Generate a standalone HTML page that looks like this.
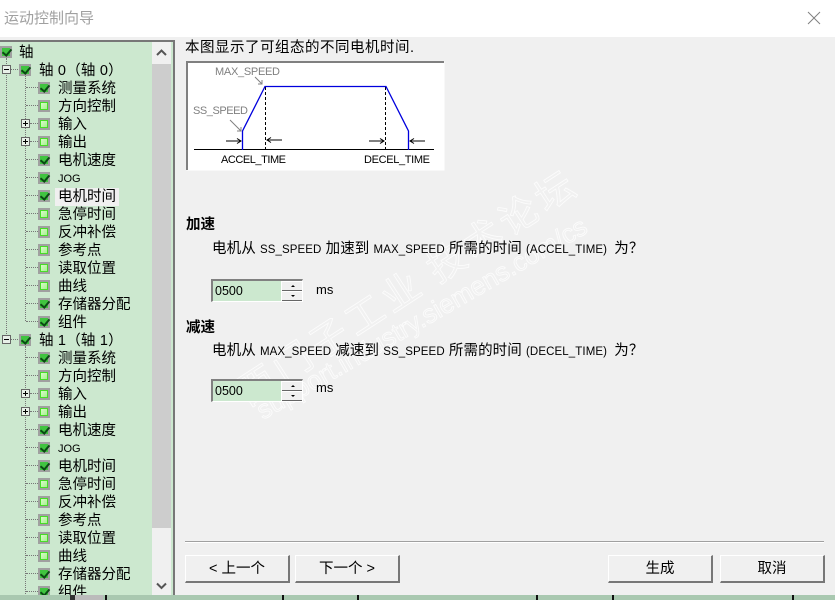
<!DOCTYPE html>
<html lang="zh"><head><meta charset="utf-8"><title>运动控制向导</title>
<style>
*{box-sizing:border-box}
html,body{margin:0;padding:0}
body{width:835px;height:600px;overflow:hidden;background:#f0f0f0;position:relative;font-family:"Liberation Sans","WenQuanYi Zen Hei","Noto Sans CJK SC",sans-serif;color:#000}
.a{position:absolute;white-space:nowrap}
.t{position:absolute;white-space:nowrap;font-size:14.5px;line-height:18px;height:18px;margin-top:1px;font-family:"Liberation Sans","WenQuanYi Zen Hei","Noto Sans CJK SC",sans-serif}
#title{left:0;top:0;width:835px;height:37px;background:#fff}
#tree{left:0;top:40px;width:175px;height:555px;background:#cce8cf;border-top:2px solid #777;border-right:2px solid #777;overflow:hidden}
.c{position:absolute;width:12px;height:12px;border:2px solid #a0a0a0;background:#fff}
.c i{position:absolute;left:0;top:0;width:8px;height:8px;background:linear-gradient(135deg,#d8fbc8,#a8f090);border:1px solid #48dc28;display:block}
.c.k i{background:#40c440;border:0}
.c.k i:after{content:"";position:absolute;left:2px;top:-1px;width:4px;height:7px;border:solid #0b4a14;border-width:0 2px 2px 0;transform:rotate(40deg)}
.e{position:absolute;width:9px;height:9px;border:1px solid #666;background:#e8f0e8}
.e:before{content:"";position:absolute;left:1px;top:3px;width:5px;height:1px;background:#000}
.e.p:after{content:"";position:absolute;left:3px;top:1px;width:1px;height:5px;background:#000}
.h{position:absolute;height:0;border-top:1px dotted #777}
.v{position:absolute;width:0;border-left:1px dotted #777}
#sb{position:absolute;left:152px;top:0;width:19px;height:553px;background:#f0f0f0}
#th{position:absolute;left:0;top:22px;width:19px;height:464px;background:#cdcdcd}
.btn{position:absolute;top:555px;width:105px;height:28px;background:#f0f0f0;border-top:1px solid #fff;border-left:1px solid #fff;border-right:2px solid #777;border-bottom:2px solid #777;text-align:center;font-size:14.5px;line-height:26px}
.spin{position:absolute;left:211px;width:92px;height:23px;background:#fff;border-top:2px solid #808080;border-left:2px solid #808080;border-right:1px solid #fff;border-bottom:1px solid #fff}
.spin b{position:absolute;left:0;top:0;width:68px;height:20px;background:#cce8cf;font-weight:normal;font-size:12.5px;line-height:20px;padding-left:2px}
.up,.dn{position:absolute;left:69px;width:20px;height:10px;background:#f0f0f0;border-bottom:1px solid #666;border-top:1px solid #fff}
.up{top:0}.dn{top:10px}
.up:after,.dn:after{content:"";position:absolute;left:9px;top:3px;border-left:2px solid transparent;border-right:2px solid transparent}
.up:after{border-bottom:2px solid #000}.dn:after{border-top:2px solid #000}
.wm{position:absolute;white-space:nowrap;transform-origin:0 0;color:#f1f1f1;-webkit-text-stroke:.8px #fcfcfc}
.m{font-size:11.5px}
#strip{left:0;top:595px;width:835px;height:5px;background:#a9c8b0;overflow:hidden}
#strip u{position:absolute;top:0;width:2px;height:5px;background:#111}
</style></head><body>
<div class="a" id="title"></div>
<div class="a" style="left:4px;top:10px;font-size:15px;line-height:18px;color:#a0a0a0">运动控制向导</div>
<svg class="a" style="left:807px;top:11px" width="15" height="15"><path d="M1 1L13 13M13 1L1 13" stroke="#808080" stroke-width="1" fill="none"/></svg>

<div class="a" id="tree">
<div class="v" style="left:6px;top:16px;height:284px"></div>
<div class="v" style="left:25px;top:34px;height:245px"></div>
<div class="v" style="left:25px;top:304px;height:250px"></div>
<div class="c k" style="left:0;top:4px"><i></i></div><div class="t" style="left:19px;top:1px">轴</div>
<div class="e" style="left:2px;top:23px"></div><div class="h" style="left:11px;top:27px;width:7px"></div>
<div class="c k" style="left:19px;top:22px"><i></i></div><div class="t" style="left:39px;top:19px;letter-spacing:.2px">轴 0（轴 0）</div>
<div class="h" style="left:26px;top:45px;width:12px"></div><div class="c k" style="left:38px;top:40px"><i></i></div><div class="t" style="left:58px;top:37px">测量系统</div>
<div class="h" style="left:26px;top:63px;width:12px"></div><div class="c" style="left:38px;top:58px"><i></i></div><div class="t" style="left:58px;top:55px">方向控制</div>
<div class="e p" style="left:21px;top:77px"></div><div class="h" style="left:30px;top:81px;width:8px"></div><div class="c" style="left:38px;top:76px"><i></i></div><div class="t" style="left:58px;top:73px">输入</div>
<div class="e p" style="left:21px;top:95px"></div><div class="h" style="left:30px;top:99px;width:8px"></div><div class="c" style="left:38px;top:94px"><i></i></div><div class="t" style="left:58px;top:91px">输出</div>
<div class="h" style="left:26px;top:117px;width:12px"></div><div class="c k" style="left:38px;top:112px"><i></i></div><div class="t" style="left:58px;top:109px">电机速度</div>
<div class="h" style="left:26px;top:135px;width:12px"></div><div class="c k" style="left:38px;top:130px"><i></i></div><div class="t" style="left:58px;top:127px;font-size:11px">JOG</div>
<div class="a" style="left:55px;top:146px;width:64px;height:18px;background:#f0f0f0"></div>
<div class="h" style="left:26px;top:153px;width:12px"></div><div class="c k" style="left:38px;top:148px"><i></i></div><div class="t" style="left:58px;top:145px">电机时间</div>
<div class="h" style="left:26px;top:171px;width:12px"></div><div class="c" style="left:38px;top:166px"><i></i></div><div class="t" style="left:58px;top:163px">急停时间</div>
<div class="h" style="left:26px;top:189px;width:12px"></div><div class="c" style="left:38px;top:184px"><i></i></div><div class="t" style="left:58px;top:181px">反冲补偿</div>
<div class="h" style="left:26px;top:207px;width:12px"></div><div class="c" style="left:38px;top:202px"><i></i></div><div class="t" style="left:58px;top:199px">参考点</div>
<div class="h" style="left:26px;top:225px;width:12px"></div><div class="c" style="left:38px;top:220px"><i></i></div><div class="t" style="left:58px;top:217px">读取位置</div>
<div class="h" style="left:26px;top:243px;width:12px"></div><div class="c" style="left:38px;top:238px"><i></i></div><div class="t" style="left:58px;top:235px">曲线</div>
<div class="h" style="left:26px;top:261px;width:12px"></div><div class="c k" style="left:38px;top:256px"><i></i></div><div class="t" style="left:58px;top:253px">存储器分配</div>
<div class="h" style="left:26px;top:279px;width:12px"></div><div class="c k" style="left:38px;top:274px"><i></i></div><div class="t" style="left:58px;top:271px">组件</div>
<div class="e" style="left:2px;top:293px"></div><div class="h" style="left:11px;top:297px;width:7px"></div>
<div class="c k" style="left:19px;top:292px"><i></i></div><div class="t" style="left:39px;top:289px;letter-spacing:.2px">轴 1（轴 1）</div>
<div class="h" style="left:26px;top:315px;width:12px"></div><div class="c k" style="left:38px;top:310px"><i></i></div><div class="t" style="left:58px;top:307px">测量系统</div>
<div class="h" style="left:26px;top:333px;width:12px"></div><div class="c" style="left:38px;top:328px"><i></i></div><div class="t" style="left:58px;top:325px">方向控制</div>
<div class="e p" style="left:21px;top:347px"></div><div class="h" style="left:30px;top:351px;width:8px"></div><div class="c" style="left:38px;top:346px"><i></i></div><div class="t" style="left:58px;top:343px">输入</div>
<div class="e p" style="left:21px;top:365px"></div><div class="h" style="left:30px;top:369px;width:8px"></div><div class="c" style="left:38px;top:364px"><i></i></div><div class="t" style="left:58px;top:361px">输出</div>
<div class="h" style="left:26px;top:387px;width:12px"></div><div class="c k" style="left:38px;top:382px"><i></i></div><div class="t" style="left:58px;top:379px">电机速度</div>
<div class="h" style="left:26px;top:405px;width:12px"></div><div class="c k" style="left:38px;top:400px"><i></i></div><div class="t" style="left:58px;top:397px;font-size:11px">JOG</div>
<div class="h" style="left:26px;top:423px;width:12px"></div><div class="c k" style="left:38px;top:418px"><i></i></div><div class="t" style="left:58px;top:415px">电机时间</div>
<div class="h" style="left:26px;top:441px;width:12px"></div><div class="c" style="left:38px;top:436px"><i></i></div><div class="t" style="left:58px;top:433px">急停时间</div>
<div class="h" style="left:26px;top:459px;width:12px"></div><div class="c" style="left:38px;top:454px"><i></i></div><div class="t" style="left:58px;top:451px">反冲补偿</div>
<div class="h" style="left:26px;top:477px;width:12px"></div><div class="c" style="left:38px;top:472px"><i></i></div><div class="t" style="left:58px;top:469px">参考点</div>
<div class="h" style="left:26px;top:495px;width:12px"></div><div class="c" style="left:38px;top:490px"><i></i></div><div class="t" style="left:58px;top:487px">读取位置</div>
<div class="h" style="left:26px;top:513px;width:12px"></div><div class="c" style="left:38px;top:508px"><i></i></div><div class="t" style="left:58px;top:505px">曲线</div>
<div class="h" style="left:26px;top:531px;width:12px"></div><div class="c k" style="left:38px;top:526px"><i></i></div><div class="t" style="left:58px;top:523px">存储器分配</div>
<div class="h" style="left:26px;top:549px;width:12px"></div><div class="c k" style="left:38px;top:544px"><i></i></div><div class="t" style="left:58px;top:541px">组件</div>
<div id="sb"><div id="th"></div>
<svg style="position:absolute;left:4px;top:7px" width="11" height="8"><path d="M1 6L5.5 1.5L10 6" stroke="#555" stroke-width="2" fill="none"/></svg>
<svg style="position:absolute;left:4px;top:540px" width="11" height="8"><path d="M1 1.5L5.5 6L10 1.5" stroke="#555" stroke-width="2" fill="none"/></svg>
</div>
</div>

<div class="a wm" style="left:231px;top:381px;font-size:38px;line-height:38px;letter-spacing:5px;word-spacing:-4px;transform:rotate(-33deg)">西门子工业 技术论坛</div>
<div class="a wm" style="left:252px;top:401px;font-size:26px;line-height:26px;transform:rotate(-30deg)">support.industry.siemens.com/cs</div>

<div class="a" style="left:185px;top:39px;font-size:14.5px;line-height:18px;letter-spacing:.5px">本图显示了可组态的不同电机时间.</div>
<svg class="a" style="left:186px;top:61px" width="259" height="110" font-family="Liberation Sans" font-size="11">
<rect x=".5" y=".5" width="258" height="109" fill="#fff"/>
<path d="M1 109V1H258" stroke="#808080" stroke-width="2" fill="none"/>
<path d="M8 88.5H248" stroke="#000"/>
<path d="M79.5 26V89M199.5 26V89" stroke="#000" stroke-dasharray="3 2"/>
<path d="M56.5 89V70L79 25.5H200L222.5 70V89" stroke="#0000dd" stroke-width="1.3" fill="none"/>
<path d="M40 80H55M51 77.5L55 80L51 82.5M96 79H81M85 76.5L81 79L85 81.5M183 80H198M194 77.5L198 80L194 82.5M239 80H224M228 77.5L224 80L228 82.5" stroke="#000" fill="none"/>
<path d="M69 16L76 23M72 23H76V19M44 59L55 70M51 70H55V66" stroke="#808080" fill="none"/>
<text x="29" y="14" fill="#808080" textLength="65">MAX_SPEED</text>
<text x="7" y="53" fill="#808080" textLength="55">SS_SPEED</text>
<text x="35" y="102" textLength="65">ACCEL_TIME</text>
<text x="178" y="102" textLength="66">DECEL_TIME</text>
</svg>

<div class="a" style="left:186px;top:216px;font-size:14.5px;line-height:18px;font-weight:bold">加速</div>
<div class="a" style="left:212px;top:239px;font-size:14.5px;line-height:20px;letter-spacing:.1px">电机从 <span class="m">SS_SPEED</span> 加速到 <span class="m">MAX_SPEED</span> 所需的时间 <span class="m">(ACCEL_TIME)</span> <span style="margin-left:3px">为？</span></div>
<div class="spin" style="top:279px"><b>0500</b><span class="up"></span><span class="dn"></span></div>
<div class="a" style="left:316px;top:282px;font-size:13px;line-height:16px">ms</div>
<div class="a" style="left:186px;top:319px;font-size:14.5px;line-height:18px;font-weight:bold">减速</div>
<div class="a" style="left:212px;top:341px;font-size:14.5px;line-height:20px;letter-spacing:.1px">电机从 <span class="m">MAX_SPEED</span> 减速到 <span class="m">SS_SPEED</span> 所需的时间 <span class="m">(DECEL_TIME)</span> <span style="margin-left:3px">为？</span></div>
<div class="spin" style="top:379px"><b>0500</b><span class="up"></span><span class="dn"></span></div>
<div class="a" style="left:316px;top:380px;font-size:13px;line-height:16px">ms</div>

<div class="a" style="left:185px;top:541px;width:639px;height:2px;background:#a0a0a0;border-bottom:1px solid #fff"></div>
<div class="btn" style="left:185px">&lt; 上一个</div>
<div class="btn" style="left:295px">下一个 &gt;</div>
<div class="btn" style="left:608px">生成</div>
<div class="btn" style="left:720px">取消</div>

<div class="a" id="strip">
<u style="left:70px;width:5px;background:#333"></u><u style="left:75px;width:28px;background:#bbb"></u><u style="left:105px"></u><u style="left:282px"></u><u style="left:357px"></u><u style="left:536px"></u><u style="left:612px"></u><u style="left:792px"></u>
</div>
</body></html>
